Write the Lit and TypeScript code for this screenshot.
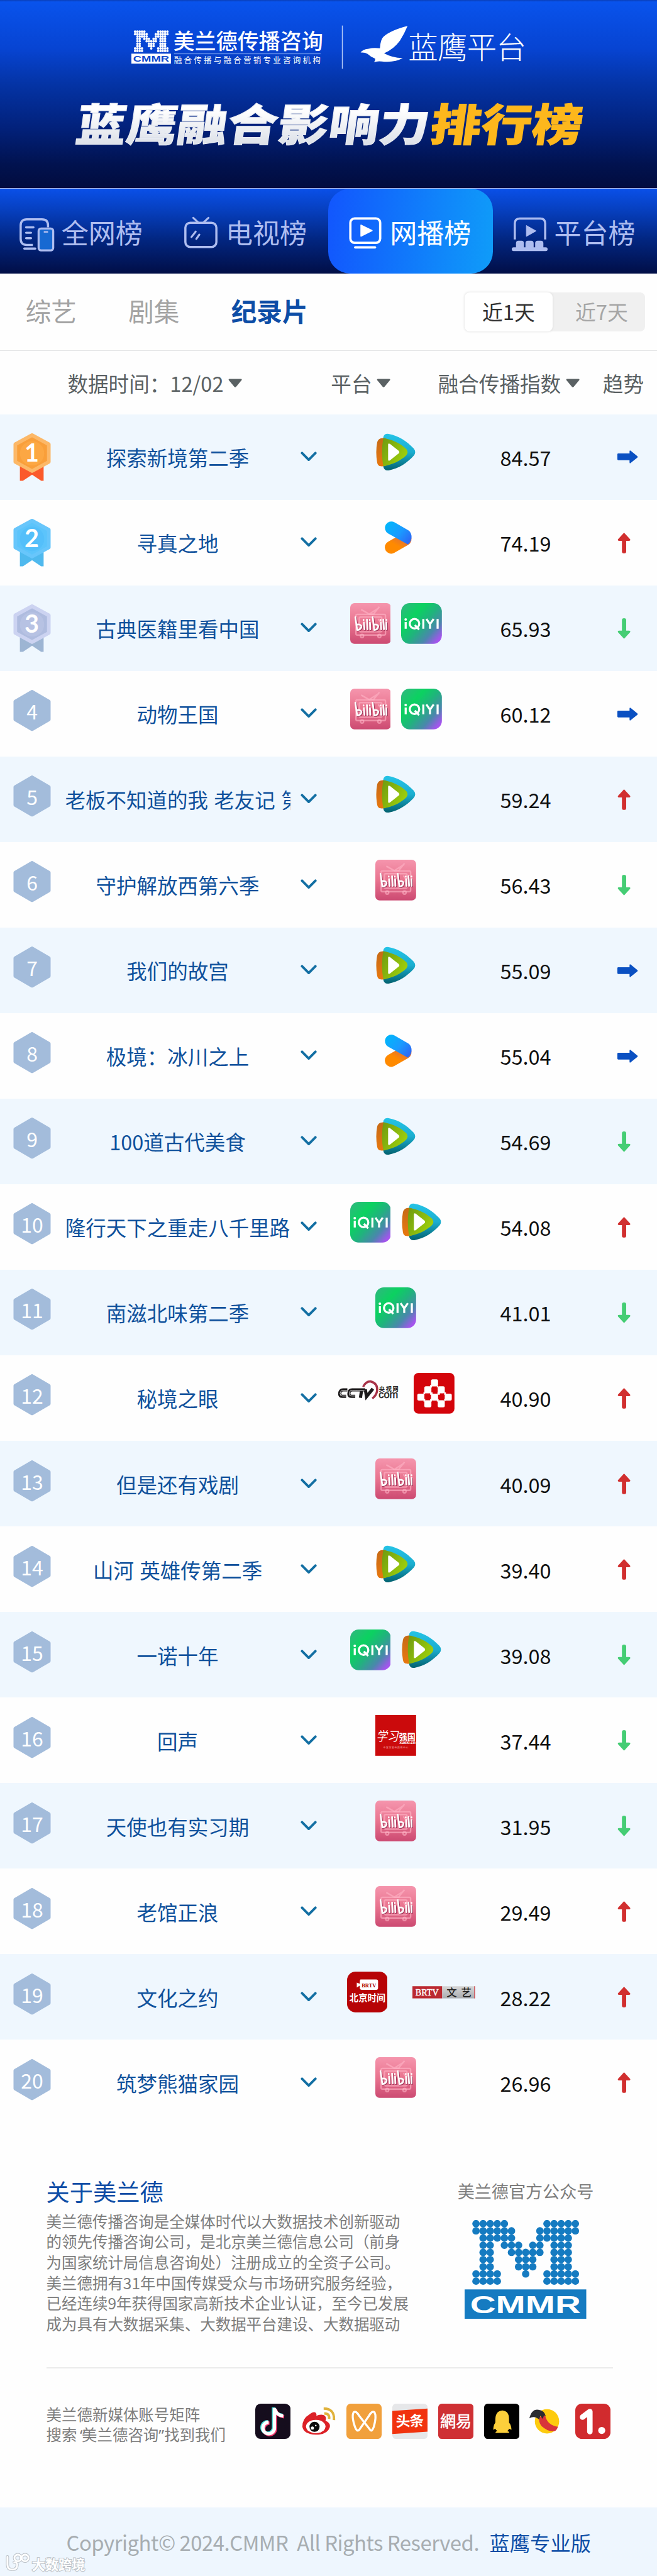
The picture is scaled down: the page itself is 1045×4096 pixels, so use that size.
import { LitElement, html, svg, css, nothing } from "lit";
import { customElement, property } from "lit/decorators.js";

type Trend = "up" | "down" | "flat";
interface Entry {
  rank: number;
  name: string;
  platforms: string[];
  score: string;
  trend: Trend;
}

const entries: Entry[] = [
  { rank: 1, name: "探索新境第二季", platforms: ["tencent"], score: "84.57", trend: "flat" },
  { rank: 2, name: "寻真之地", platforms: ["youku"], score: "74.19", trend: "up" },
  { rank: 3, name: "古典医籍里看中国", platforms: ["bilibili", "iqiyi"], score: "65.93", trend: "down" },
  { rank: 4, name: "动物王国", platforms: ["bilibili", "iqiyi"], score: "60.12", trend: "flat" },
  { rank: 5, name: "老板不知道的我 老友记 第二季", platforms: ["tencent"], score: "59.24", trend: "up" },
  { rank: 6, name: "守护解放西第六季", platforms: ["bilibili"], score: "56.43", trend: "down" },
  { rank: 7, name: "我们的故宫", platforms: ["tencent"], score: "55.09", trend: "flat" },
  { rank: 8, name: "极境：冰川之上", platforms: ["youku"], score: "55.04", trend: "flat" },
  { rank: 9, name: "100道古代美食", platforms: ["tencent"], score: "54.69", trend: "down" },
  { rank: 10, name: "隆行天下之重走八千里路", platforms: ["iqiyi", "tencent"], score: "54.08", trend: "up" },
  { rank: 11, name: "南滋北味第二季", platforms: ["iqiyi"], score: "41.01", trend: "down" },
  { rank: 12, name: "秘境之眼", platforms: ["cctv", "yangshipin"], score: "40.90", trend: "up" },
  { rank: 13, name: "但是还有戏剧", platforms: ["bilibili"], score: "40.09", trend: "up" },
  { rank: 14, name: "山河 英雄传第二季", platforms: ["tencent"], score: "39.40", trend: "up" },
  { rank: 15, name: "一诺十年", platforms: ["iqiyi", "tencent"], score: "39.08", trend: "down" },
  { rank: 16, name: "回声", platforms: ["xuexi"], score: "37.44", trend: "down" },
  { rank: 17, name: "天使也有实习期", platforms: ["bilibili"], score: "31.95", trend: "down" },
  { rank: 18, name: "老馆正浪", platforms: ["bilibili"], score: "29.49", trend: "up" },
  { rank: 19, name: "文化之约", platforms: ["btime", "brtv"], score: "28.22", trend: "up" },
  { rank: 20, name: "筑梦熊猫家园", platforms: ["bilibili"], score: "26.96", trend: "up" },
];

const sans = css`"Noto Sans CJK SC", "Noto Sans", sans-serif`;

/* Columns that carry a dot on each line of the CMMR "M" mark. */
const markRows: number[][] = [
  [0, 1, 2, 3, 4, 10, 11, 12, 13, 14],
  [0, 1, 2, 3, 4, 5, 9, 10, 11, 12, 13, 14],
  [1, 2, 3, 4, 5, 9, 10, 11, 12, 13],
  [1, 2, 4, 5, 6, 8, 9, 11, 12, 13],
  [1, 2, 5, 6, 7, 8, 9, 11, 12, 13],
  [1, 2, 6, 7, 8, 11, 12, 13],
  [1, 2, 6, 7, 8, 11, 12, 13],
  [0, 1, 2, 3, 7, 10, 11, 12, 13, 14],
  [0, 1, 2, 3, 10, 11, 12, 13, 14],
];

const dotMark = (fill: string, textFill: string) => svg`
  <g fill=${fill}>
    ${markRows.map((cols, r) => cols.map((c) => svg`<circle cx=${18.7 + c * 11.67} cy=${6 + r * 11.8} r="6.1"/>`))}
    <rect x="0" y="114" width="200" height="49"/>
  </g>
  <text x="9" y="153.5" font-family="Liberation Sans" font-weight="700" font-size="41"
    textLength="182" lengthAdjust="spacingAndGlyphs" fill=${textFill}>CMMR</text>`;

@customElement("platform-icon")
export class PlatformIcon extends LitElement {
  @property() name = "";

  static styles = css`
    :host { display: block; }
    svg { display: block; }
  `;

  private tencent() {
    return html`<svg width="67" height="67" viewBox="0 0 67 67">
      <defs>
        <linearGradient id="a" x1="0" y1="0" x2="0" y2="1"><stop offset="0" stop-color="#25c3e6"/><stop offset=".5" stop-color="#1baed0"/><stop offset="1" stop-color="#02616f"/></linearGradient>
        <linearGradient id="b" x1="0" y1="0" x2="0" y2="1"><stop offset="0" stop-color="#c66a16"/><stop offset="1" stop-color="#e8780f"/></linearGradient>
        <linearGradient id="c" x1="0" y1="0" x2="1" y2=".6"><stop offset="0" stop-color="#6f9a10"/><stop offset="1" stop-color="#9fd00c"/></linearGradient>
      </defs>
      <path d="M13 9Q14 2 22 3C38 6 52 15 63 27Q68 33 63 39C52 51 38 60 22 63Q14 64 13 56Q9 33 13 9Z" fill="url(#a)"/>
      <path d="M3 17Q5 10 11 10Q15 9 20 12V54Q14 57 9 56Q4 56 3 50Q0 33 3 17Z" fill="url(#b)"/>
      <path d="M13 10C28 12 42 19 51 28Q55 33 51 38C42 47 28 54 13 56Q9 33 13 10Z" fill="url(#c)"/>
      <path d="M21 20.500Q21 18 24 19.500L38 30.500Q41 33 38 35.500L24 46.500Q21 48 21 45.500Z" fill="#fff"/>
    </svg>`;
  }

  private youku() {
    return html`<svg width="67" height="67" viewBox="0 0 67 67">
      <defs>
        <linearGradient id="a" x1="0" y1="0" x2="1" y2=".7"><stop offset=".1" stop-color="#02b5fb"/><stop offset=".6" stop-color="#1a9bff"/><stop offset="1" stop-color="#2b6cf6"/></linearGradient>
        <linearGradient id="b" x1="0" y1="1" x2="1" y2="0"><stop offset=".3" stop-color="#ff8a00"/><stop offset="1" stop-color="#e0703a"/></linearGradient>
      </defs>
      <path d="M26 48.800L49 35.600" stroke="url(#b)" stroke-width="21" stroke-linecap="round"/>
      <path d="M31.500 7.800L54.300 21C61.500 26 61.500 38 53.500 44.200L21 26A10.500 10.500 0 0 1 31.500 7.800Z" fill="url(#a)"/>
    </svg>`;
  }

  private bilibili() {
    return html`<svg width="67" height="67" viewBox="0 0 67 67">
      <defs><linearGradient id="a" x1="0" y1="0" x2="0" y2="1"><stop offset="0" stop-color="#f595ad"/><stop offset=".5" stop-color="#e9748f"/><stop offset="1" stop-color="#cc4a72"/></linearGradient></defs>
      <rect width="67" height="67" rx="7" fill="url(#a)"/>
      <g fill="none" stroke="#ffb4c6" stroke-opacity=".6" stroke-width="2.500">
        <rect x="9.500" y="18.500" width="48.500" height="34" rx="2"/><rect x="15" y="23" width="37" height="24" rx="2"/>
        <path d="M18 10.500L31 18L47 8M31 18L40 18M39 17L48 6M46 26L52 34"/><circle cx="19.500" cy="54" r="2.500"/><circle cx="48" cy="54" r="2.500"/>
      </g>
      <g fill="none" stroke-linecap="round">
        <g stroke="#9d3558" stroke-width="3" transform="translate(1 1)">
          <path d="M8.500 23L11.500 44M11.500 35Q19 35 18.500 39Q17 44 11.500 44M22.500 32L23.500 43M27.500 27L28.500 43M32.500 32L33 43M37 23L39.500 44M39.500 35Q47 35 46 39Q45 44 39.500 44M50.500 32L51 43M54.500 27L55.500 43M59.500 32L59.500 43"/>
        </g>
        <g stroke="#fff" stroke-width="2.800">
          <path d="M8.500 23L11.500 44M11.500 35Q19 35 18.500 39Q17 44 11.500 44M22.500 32L23.500 43M27.500 27L28.500 43M32.500 32L33 43M37 23L39.500 44M39.500 35Q47 35 46 39Q45 44 39.500 44M50.500 32L51 43M54.500 27L55.500 43M59.500 32L59.500 43"/>
          <path d="M22 27.500v.3M32 27.500v.3M50 27.500v.3M59.500 27.500v.3" stroke-width="2.600"/>
        </g>
      </g>
    </svg>`;
  }

  private iqiyi() {
    return html`<svg width="67" height="67" viewBox="0 0 67 67">
      <defs>
        <linearGradient id="a" x1="0" y1=".1" x2="1" y2="1"><stop offset="0" stop-color="#2cba7c"/><stop offset=".28" stop-color="#0bd260"/><stop offset=".5" stop-color="#20b37d"/><stop offset=".72" stop-color="#4a87ac"/><stop offset=".9" stop-color="#a256ec"/><stop offset="1" stop-color="#b34df5"/></linearGradient>
      </defs>
      <rect width="67" height="67" rx="14" fill="url(#a)"/>
      <g fill="none" stroke="#fff" stroke-width="3.400">
        <path d="M7.500 31V42M36.500 26V42M41.500 26L47.500 34.500L53.500 26M47.500 34V42M60 26V42"/>
        <circle cx="22" cy="33.800" r="7.800"/><path d="M22.500 36L29.500 43.500"/>
      </g>
      <circle cx="7.500" cy="26.800" r="2.100" fill="#fff"/>
    </svg>`;
  }

  private cctv() {
    return html`<svg width="100" height="67" viewBox="0 0 100 67">
      <path d="M42 23Q46 14 54 14Q66 17 65 29Q64 37 57 42" fill="none" stroke="#a83348" stroke-width="3.600"/>
      <g fill="none" stroke="#1c1a1b" stroke-width="5.200">
        <path d="M16 28H9Q3.500 28 3.500 34.500Q3.500 38.500 8 38.500H14M31.500 28H24Q18.500 28 18.500 34.500Q18.500 38.500 23 38.500H29M31 28H45.500M39.500 28L37.500 41M45.500 27L47.500 39L58 26"/>
      </g>
      <path d="M16 28.500H9Q5 28.500 4 34Q4 38 8 38H14M31.500 28.500H24Q20 28.500 19 34Q19 38 23 38H29M31 28.500H44" fill="none" stroke="#fff" stroke-width=".9"/>
      <text x="68" y="30" font-family="Noto Sans CJK SC" font-weight="700" font-size="9.500" textLength="32" fill="#222">央视网</text>
      <text x="67.500" y="41.500" font-family="Liberation Sans" font-size="17" stroke="#222" stroke-width=".5" textLength="32" lengthAdjust="spacingAndGlyphs" fill="#222">com</text>
    </svg>`;
  }

  private yangshipin() {
    const cells = [[28.5, 10.5], [17.5, 22], [39.5, 22], [6, 34], [28.5, 34], [51, 34], [17.5, 45], [39.5, 45]];
    return html`<svg width="67" height="67" viewBox="0 0 67 67">
      <rect width="67" height="67" rx="8" fill="#d4040b"/>
      <path d="M27 20L31 20L30 24L27 24ZM27 32L31 32L31 36L27 36ZM39 32L43 32L43 36L39 36ZM38 20L41 23L38 24ZM16 32H19V35H16ZM50 32H53V36H50ZM27 43H30V47H27ZM38 43H41V47H38ZM16 43H19V47H16ZM50 43H53V46H50Z" fill="#fff"/>
      ${cells.map(([x, y]) => svg`<rect x=${x} y=${y} width="11.600" height="11.600" rx="2.600" fill="#fff"/>`)}
    </svg>`;
  }

  private xuexi() {
    return html`<svg width="67" height="67" viewBox="0 0 67 67">
      <rect width="67" height="67" fill="#cb0a0c"/>
      <text x="0" y="42" font-family="Noto Sans CJK SC" font-size="21" transform="skewX(-12) translate(10.500 0)" textLength="36" lengthAdjust="spacingAndGlyphs" fill="#fff">学习</text>
      <text x="39" y="40.500" font-family="Noto Sans CJK SC" font-weight="700" font-size="13.500" textLength="27" fill="#fff">强国</text>
      <text x="39.500" y="48" font-family="Liberation Sans" font-weight="700" font-size="7" textLength="26.500" fill="#fff">xuexi.cn</text>
      <text x="13" y="55" font-family="Noto Sans CJK SC" font-size="4" textLength="41" fill="#f3b0b0">中宣部宣传舆情中心</text>
    </svg>`;
  }

  private btime() {
    return html`<svg width="67" height="67" viewBox="0 0 67 67">
      <rect width="67" height="67" rx="14" fill="#b70306"/>
      <path d="M22 13H48Q51 13 51 16V27Q51 30 48 30H24Q22 30 21 28V23L16 26V18L21 20V15Z" fill="#fff"/>
      <text x="24" y="25.500" font-family="Liberation Serif" font-weight="700" font-size="9.500" textLength="24" lengthAdjust="spacingAndGlyphs" fill="#a00">BRTV</text>
      <text x="4" y="49" font-family="Noto Sans CJK SC" font-weight="700" font-size="14.800" textLength="59" fill="#fff">北京时间</text>
    </svg>`;
  }

  private brtv() {
    return html`<svg width="103" height="67" viewBox="0 0 103 67">
      <defs><linearGradient id="g" x1="0" y1="0" x2="0" y2="1"><stop offset="0" stop-color="#d6d6d6"/><stop offset="1" stop-color="#aaadb1"/></linearGradient></defs>
      <rect y="24" width="49" height="20" fill="#bb2931"/><rect x="49" y="24" width="53" height="20" fill="url(#g)"/><rect x="101.500" y="24" width="1.500" height="20" fill="#cc4a50"/>
      <text x="5" y="38.800" font-family="Liberation Serif" font-size="14" stroke="#fff" stroke-width=".4" textLength="38" lengthAdjust="spacingAndGlyphs" fill="#fff">BRTV</text>
      <text x="56" y="40" font-family="Noto Sans CJK SC" font-weight="500" font-size="17" textLength="41" fill="#222">文艺</text>
    </svg>`;
  }

  render() {
    switch (this.name) {
      case "tencent": return this.tencent();
      case "youku": return this.youku();
      case "bilibili": return this.bilibili();
      case "iqiyi": return this.iqiyi();
      case "cctv": return this.cctv();
      case "yangshipin": return this.yangshipin();
      case "xuexi": return this.xuexi();
      case "btime": return this.btime();
      case "brtv": return this.brtv();
      default: return nothing;
    }
  }
}

@customElement("rank-badge")
export class RankBadge extends LitElement {
  @property({ type: Number }) rank = 0;

  static styles = css`
    :host { display: block; }
    svg { display: block; }
    .medal { font: 700 41px Lato, sans-serif; }
    .plain { font: 400 33px ${sans}; }
  `;

  render() {
    const palette: Record<number, string[]> = {
      1: ["#fdae4a", "#f99f3a", "#fb5a2b", "#fcb868"],
      2: ["#4fbcfa", "#5cc4fb", "#4fb9ee", "#68c6fb"],
      3: ["#bcc6e6", "#afbcdf", "#9db5d3", "#ccd3f1"],
    };
    const p = palette[this.rank];
    const hex = "M31 3L58.5 18V47L31 62L3.5 47V18Z";
    return html`<svg width="62" height="79" viewBox="0 0 62 79">
      ${p
        ? svg`<path d="M11 50H50V78H46L31 68L16 78H11Z" fill=${p[2]}/>
            <path d=${hex} fill=${p[1]} stroke=${p[3]} stroke-width="6" stroke-linejoin="round"/>
            <circle cx="31" cy="33" r="20" fill=${p[0]} fill-opacity=".6"/>
            <text class="medal" x="30.5" y="47" text-anchor="middle" fill="#fff">${this.rank}</text>`
        : svg`<path d="M31 3L58.500 19V48.500L31 64.500L3.500 48.500V19Z" fill="#a3bcdb" stroke="#a3bcdb" stroke-width="6" stroke-linejoin="round"/>
            <text class="plain" x="31" y="49" text-anchor="middle" fill="#fff">${this.rank}</text>`}
    </svg>`;
  }
}

@customElement("rank-row")
export class RankRow extends LitElement {
  @property({ attribute: false }) entry!: Entry;

  static styles = css`
    :host { display: block; }
    .row {
      display: grid;
      grid-template-columns: 107px 370px 63px 222px 204px 114px;
      height: 140.600px;
      box-sizing: border-box;
      align-items: start;
      font: 33.600px/48px ${sans};
    }
    .odd { background: #eff7fe; }
    .badge { padding: 31.500px 0 0 22px; }
    .name {
      margin-top: 47px;
      overflow: hidden;
      white-space: nowrap;
      display: flex;
      justify-content: safe center;
      color: #0f519c;
      word-spacing: 2px;
    }
    .chevron { padding: 61.500px 0 0 17px; }
    .chevron svg, .trend svg { display: block; }
    .platforms { display: flex; justify-content: center; gap: 17.500px; padding-top: 29px; }
    .platforms.wide { gap: 25px; }
    .platforms.late { gap: 41px; padding-left: 30px; justify-content: flex-start; }
    .score { margin-top: 47px; text-align: center; color: #111; }
    .trend { padding: 52.500px 0 0 48px; }
  `;

  private trendIcon(t: Trend) {
    if (t === "flat")
      return html`<svg width="36" height="36" viewBox="0 0 36 36"><path d="M2.500 12.500H21V9Q21 6.500 23 8L34 17Q35 18 34 19L23 28Q21 29.500 21 27V23.500H2.500Q1 23.500 1 22V14Q1 12.500 2.500 12.500Z" fill="#0a50c2"/></svg>`;
    const d = "M12 1L22 12Q23 14.500 20 14.500H15.500V32Q15.500 35 12 35T8.500 32V14.500H4Q1 14.500 2 12Z";
    return html`<svg width="24" height="36" viewBox="0 0 24 36">
      <path d=${d} fill=${t === "up" ? "#d12f2f" : "#45cd74"} transform=${t === "up" ? "" : "rotate(180 12 18)"}/></svg>`;
  }

  render() {
    const e = this.entry;
    const spacing = e.platforms.includes("cctv") ? "wide" : e.platforms.includes("brtv") ? "late" : "";
    return html`<div class="row ${e.rank % 2 ? "odd" : ""}">
      <div class="badge"><rank-badge .rank=${e.rank}></rank-badge></div>
      <div class="name"><span>${e.name}</span></div>
      <div class="chevron"><svg width="27" height="18" viewBox="0 0 27 18"><path d="M2.500 2.500L13.500 13.500L24.500 2.500" fill="none" stroke="#136fa3" stroke-width="4" stroke-linecap="round" stroke-linejoin="round"/></svg></div>
      <div class="platforms ${spacing}">${e.platforms.map((p) => html`<platform-icon name=${p}></platform-icon>`)}</div>
      <div class="score">${e.score}</div>
      <div class="trend">${this.trendIcon(e.trend)}</div>
    </div>`;
  }
}

const tabIcons = {
  all: svg`<path d="M24 47H14Q4 47 4 37V15Q4 5 14 5H39Q49 5 49 15V18" fill="none" stroke-width="3.600"/>
    <path d="M13 18H25M13 27H21M13 36H21M10 53H28" fill="none" stroke-width="3.600" stroke-linecap="round"/>
    <rect x="33.500" y="20" width="24" height="36" rx="4" fill="#1769d2" stroke-width="3.400"/><path d="M42 25.500H49" stroke-width="2.600"/>`,
  tv: svg`<rect x="5" y="10.500" width="51" height="40" rx="8" fill="none" stroke-width="3.600"/>
    <path d="M18 2.500L26 10M43 2.500L35 10M15 34L22 25M23 37L28 30" fill="none" stroke-width="3.200" stroke-linecap="round"/>`,
  web: svg`<rect x="6.500" y="3.500" width="49" height="40" rx="7" fill="none" stroke-width="3.800"/>
    <path d="M24 14.500L42 23.500L24 32.500Z" fill="currentColor" stroke-width="2" stroke-linejoin="round"/><path d="M14.500 51H47" stroke-width="3.800" stroke-linecap="round"/>`,
  stage: svg`<path d="M6 38V12Q6 3.500 14 3.500H48Q56 3.500 56 12V38" fill="none" stroke-width="3.600"/>
    <path d="M25 15L41 24L25 33Z" fill="currentColor" stroke-width="1"/>
    <path d="M8 53V44Q8 40 12 40H17Q21 40 21 44V53ZM23.500 53V44Q23.500 40 27.500 40H33Q37 40 37 44V53ZM39.500 53V44Q39.500 40 43.500 40H49Q53 40 53 44V53Z" fill="currentColor" stroke="none"/><path d="M4 54H57" stroke-width="6" stroke-linecap="round"/>`,
};

@customElement("app-root")
export class AppRoot extends LitElement {
  static styles = css`
    :host { display: block; }
    .page {
      zoom: 0.96759;
      width: 1080px;
      height: 4233px;
      overflow: hidden;
      position: relative;
      display: flex;
      flex-direction: column;
      background: #fefefe;
      font-family: ${sans};
      color: #7d7d7d;
    }
    svg { display: block; }
    .banner {
      height: 309px;
      border-bottom: 1px solid #aebbe6;
      background: linear-gradient(#0a3fb8 0, #0953ec 3px, #0744d2 80px, #0433a4 140px, #02217b 210px, #01124f 270px, #020c3e 309px);
    }
    .title { font: 900 72px ${sans}; }
    .nav {
      display: grid;
      grid-template-columns: repeat(4, 270px);
      height: 140px;
      background: linear-gradient(#0a50e8, #063db9 40px, #02257f 85px, #010e46 140px);
    }
    .tab {
      display: flex;
      align-items: flex-start;
      color: #aebdf0;
      padding: 45px 0 0 30px;
      gap: 11px;
      font-size: 44.500px;
      line-height: 60px;
      white-space: nowrap;
      stroke: currentColor;
    }
    .tab span { margin-top: -5px; stroke: none; }
    .tab.active { color: #fff; background: linear-gradient(95deg, #1256fd, #0f9cf9); border-radius: 36px; }
    .filters {
      display: flex;
      justify-content: space-between;
      height: 126px;
      border-bottom: 2px solid #e3e4e5;
    }
    .kinds { display: flex; gap: 85px; padding: 31px 0 0 42px; font-size: 42px; line-height: 60px; color: #a3a3a3; }
    .kinds .on { color: #0d4da6; font-weight: 700; }
    .range { display: flex; margin: 31px 20px 0 0; width: 296px; height: 64px; background: #f0f0f0; border-radius: 8px; font-size: 34px; line-height: 62px; }
    .range span { flex: 1; text-align: center; color: #a6a6a6; padding-left: 10px; }
    .range .on { flex: 0 0 144px; padding: 0; color: #333; background: #fff; border-radius: 8px; box-shadow: 0 0 4px #d8d8d8; }
    .thead {
      display: grid;
      grid-template-columns: 544px 176px 271px 89px;
      height: 103.700px;
      font-size: 33.700px;
      line-height: 106px;
      color: #5a6163;
      white-space: nowrap;
    }
    .cell { display: flex; align-items: center; gap: 8px; height: 106px; }
    .cell.first { padding-left: 111px; }
    .about { display: flex; justify-content: space-between; height: 398px; margin: 0 72px 0 76px; box-sizing: border-box; padding-top: 83px; }
    .about h2 { margin: 0; font-size: 38.500px; line-height: 50px; font-weight: 400; color: #0d4da6; }
    .about p { margin: 8px 0 0; font-size: 25.300px; line-height: 33.750px; white-space: nowrap; }
    .official { width: 230px; margin-right: 29px; display: flex; flex-direction: column; align-items: center; font-size: 28px; line-height: 50px; white-space: nowrap; }
    .official svg { margin-top: 22.500px; }
    .rule { height: 2px; margin: 0 72px 0 76px; background: #ebebeb; }
    .media { display: flex; align-items: flex-start; height: 227.700px; padding: 0 0 0 76px; }
    .media p { margin: 59px 0 0; width: 343.500px; font-size: 25.300px; line-height: 33px; white-space: nowrap; }
    .open { font-family: "Noto Sans"; margin: 0 -6px 0 -1px; }
    .close { font-family: "Noto Sans"; }
    .social { display: flex; gap: 17.200px; padding-top: 58px; }
    .copy {
      flex: 1;
      background: #eef6fe;
      display: flex;
      align-items: flex-start;
      gap: 17px;
      padding: 27px 0 0 109px;
      font-size: 34px;
      line-height: 60px;
      color: #a7adb1;
      white-space: nowrap;
    }
    .copy span { letter-spacing: -.52px; }
    .copy a { color: #0d4da6; font-size: 33.400px; }
    .mark { position: absolute; left: 8px; bottom: 2px; }
  `;

  private banner() {
    return html`<header class="banner">
      <svg width="1080" height="309" viewBox="0 0 1080 309">
        <defs>
          <linearGradient id="silver" x1="0" y1="0" x2="0" y2="1"><stop offset=".3" stop-color="#fff"/><stop offset="1" stop-color="#d3d8e2"/></linearGradient>
        </defs>
        <g transform="translate(216 50) scale(.325 .335)">${dotMark("#fff", "#0846cc")}</g>
        <g fill="#fff" font-family="Noto Sans CJK SC">
          <text x="285" y="80.500" font-size="35" font-weight="500" textLength="246">美兰德传播咨询</text>
          <rect x="286" y="88" width="241" height="1" fill="#8fb4f5"/>
          <text x="286" y="103.500" font-size="13" textLength="241">融合传播与融合营销专业咨询机构</text>
          <rect x="562" y="42" width="1.500" height="71" fill="#b8cdf8"/>
          <g transform="translate(180 20) scale(.4592 .3333)">
            <path d="M1067 68Q1005 90 980 122Q970 135 968 178Q945 174 928 180Q904 184 899 199Q914 197 924 206Q936 222 951 229Q952 240 946 247Q958 240 975 243Q1020 250 1050 226Q1015 227 983 203Q1018 182 1040 140Q1056 105 1067 68Z"/>
          </g>
          <text x="671" y="96.500" font-size="49" font-weight="300" textLength="194">蓝鹰平台</text>
        </g>
        <g transform="translate(122 232) skewX(-8) scale(1.148 1)" class="title" stroke-width="1.200">
          <text x="0" y="0" textLength="506" fill="url(#silver)" stroke="#e8ebf2">蓝鹰融合影响力</text>
          <text x="508" y="0" textLength="217" fill="#fdb71c" stroke="#fdb71c">排行榜</text>
        </g>
      </svg>
    </header>`;
  }

  private social() {
    return html`<div class="social">
      <svg width="58" height="58" viewBox="0 0 58 58"><rect width="58" height="58" rx="9" fill="#150d1d"/>
        <g fill="none" stroke-width="5.500"><path d="M31.500 7V40A9.500 9.500 0 1 1 22 30.500M32 9Q35 19 46 20" stroke="#3fd9d3" transform="translate(-1.500 -1)"/><path d="M31.500 7V40A9.500 9.500 0 1 1 22 30.500M32 9Q35 19 46 20" stroke="#f0356b" transform="translate(1.500 1.500)"/><path d="M31.500 7V40A9.500 9.500 0 1 1 22 30.500M32 9Q35 19 46 20" stroke="#fff"/></g></svg>
      <svg width="58" height="58" viewBox="0 0 58 58">
        <path d="M22 14Q26 15 25 20Q35 16 39 20Q42 23 40 28Q49 32 47 39Q43 51 24 51Q4 50 2 38Q2 24 13 18Q19 13 22 14Z" fill="#dc2127"/>
        <ellipse cx="24" cy="37.500" rx="16" ry="11" fill="#fff"/><circle cx="22" cy="38" r="8.300" fill="#0b0b0b"/><circle cx="18.500" cy="40" r="2.600" fill="#fff"/><circle cx="24" cy="36" r="1.300" fill="#fff"/>
        <path d="M37 8Q55 8 54 27M38 16Q47 16 46 25" fill="none" stroke="#e0b23c" stroke-width="4"/></svg>
      <svg width="58" height="58" viewBox="0 0 58 58"><rect width="58" height="58" rx="7" fill="#f1a03c"/>
        <path d="M12 14Q16 11 21 20L39 43Q42 47 45 38Q50 20 46 14Q42 11 37 20L21 43Q17 47 14 38Q8 20 12 14Z" fill="none" stroke="#fff" stroke-width="3.400"/></svg>
      <svg width="58" height="58" viewBox="0 0 58 58"><rect width="58" height="58" rx="6" fill="#e6e7e9"/><path d="M0 12L58 8V46L0 50Z" fill="#f1330e"/>
        <text x="6" y="37" font-family="Noto Sans CJK SC" font-weight="700" font-size="23.500" textLength="46" transform="rotate(-2 29 29)" fill="#fff">头条</text></svg>
      <svg width="58" height="58" viewBox="0 0 58 58"><rect width="58" height="58" rx="6" fill="#cf3034"/>
        <text x="3" y="38" font-family="Noto Sans CJK TC" font-size="26" textLength="52" fill="#fff" stroke="#fff" stroke-width=".5">網易</text></svg>
      <svg width="58" height="58" viewBox="0 0 58 58"><rect width="58" height="58" rx="6" fill="#000"/>
        <path d="M30 11Q41 12 41 25V31Q45 36 45 43L41 41Q40 44 38 45Q42 46 41 48H19Q18 46 22 45Q19 43 18.500 41L15 43Q15 36 18.500 31V25Q19 12 30 11Z" fill="#fccf3b"/></svg>
      <svg width="58" height="58" viewBox="0 0 58 58"><circle cx="29" cy="29" r="20" fill="#fdcb0e"/>
        <path d="M17 22Q24 18 26 20Q30 36 47 38Q44 46 40 45Q32 47 20 37Q14 29 17 22Z" fill="#d8343a"/>
        <path d="M0 24Q4 8 15 10Q25 11 27 21L24 19L22 25L18 20L16 26Q8 19 0 24Z" fill="#2a2c30"/></svg>
      <svg width="58" height="58" viewBox="0 0 58 58"><rect width="58" height="58" rx="11" fill="#d12b2e"/>
        <path d="M12 22L24 13V46" fill="none" stroke="#fff" stroke-width="9" stroke-linecap="round" stroke-linejoin="round"/><circle cx="43.500" cy="44" r="5.800" fill="#fff"/></svg>
    </div>`;
  }

  render() {
    const tri = html`<svg width="23" height="15" viewBox="0 0 23 15"><path d="M2 .5H21Q23 .5 22 2.500L13 13.500Q11.500 15 10 13.500L1 2.500Q0 .5 2 .5Z" fill="#5a6163"/></svg>`;
    const tabs: [keyof typeof tabIcons, string][] = [["all", "全网榜"], ["tv", "电视榜"], ["web", "网播榜"], ["stage", "平台榜"]];
    return html`<div class="page">
      ${this.banner()}
      <nav class="nav">
        ${tabs.map(([k, label]) => html`<div class="tab ${k === "web" ? "active" : ""}"><svg width="60" height="60" viewBox="0 0 60 60">${tabIcons[k]}</svg><span>${label}</span></div>`)}
      </nav>
      <div class="filters">
        <div class="kinds"><span>综艺</span><span>剧集</span><span class="on">纪录片</span></div>
        <div class="range"><span class="on">近1天</span><span>近7天</span></div>
      </div>
      <div class="thead">
        <div class="cell first">数据时间：12/02${tri}</div>
        <div class="cell">平台${tri}</div>
        <div class="cell">融合传播指数${tri}</div>
        <div class="cell">趋势</div>
      </div>
      <main>${entries.map((e) => html`<rank-row .entry=${e}></rank-row>`)}</main>
      <section class="about">
        <div>
          <h2>关于美兰德</h2>
          <p>美兰德传播咨询是全媒体时代以大数据技术创新驱动<br>的领先传播咨询公司，是北京美兰德信息公司（前身<br>为国家统计局信息咨询处）注册成立的全资子公司。<br>美兰德拥有31年中国传媒受众与市场研究服务经验，<br>已经连续9年获得国家高新技术企业认证，至今已发展<br>成为具有大数据采集、大数据平台建设、大数据驱动</p>
        </div>
        <div class="official">美兰德官方公众号<svg width="200" height="163" viewBox="0 0 200 163">${dotMark("#157bc1", "#fff")}</svg></div>
      </section>
      <div class="rule"></div>
      <section class="media">
        <p>美兰德新媒体账号矩阵<br>搜索 <span class="open">“</span>美兰德咨询<span class="close">”</span>找到我们</p>
        ${this.social()}
      </section>
      <footer class="copy"><span>Copyright© 2024.CMMR&nbsp; All Rights Reserved.</span><a>蓝鹰专业版</a></footer>
      <svg class="mark" width="136" height="48" viewBox="0 0 136 48">
        <g fill="none" stroke="#b9bfc6" stroke-width="5" stroke-linecap="round"><path d="M4 19V32Q4 40 12 40Q20 40 20 32Q20 28 15 28"/><circle cx="21" cy="21" r="5.500"/><circle cx="33" cy="21" r="5.500"/></g>
        <g fill="none" stroke="#fff" stroke-width="3" stroke-linecap="round"><path d="M4 19V32Q4 40 12 40Q20 40 20 32Q20 28 15 28"/><circle cx="21" cy="21" r="5.500"/><circle cx="33" cy="21" r="5.500"/></g>
        <text x="44" y="40" font-family="Noto Sans CJK SC" font-size="22" font-weight="700" fill="#fff" stroke="#b9bfc6" stroke-width="2" paint-order="stroke">大数跨境</text>
      </svg>
    </div>`;
  }
}
